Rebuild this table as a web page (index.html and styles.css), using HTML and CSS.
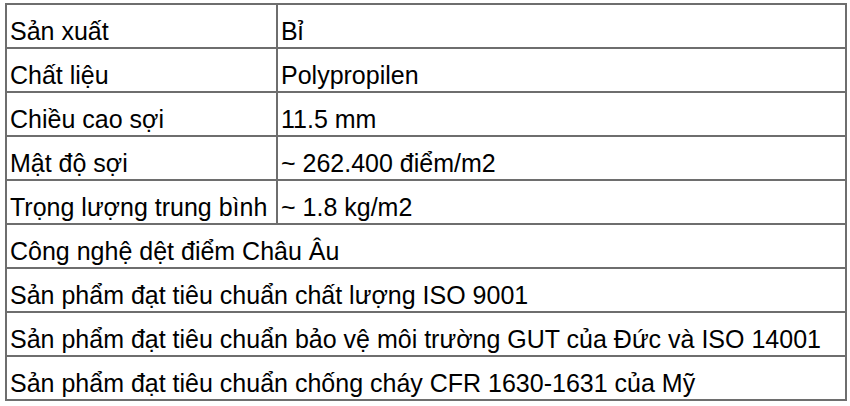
FILE: index.html
```html
<!DOCTYPE html>
<html lang="vi">
<head>
<meta charset="utf-8">
<link rel="stylesheet" href="styles.css">
</head>
<body>
<table class="spec">
  <tr><td class="label">Sản xuất</td><td class="value">Bỉ</td></tr>
  <tr><td class="label">Chất liệu</td><td class="value">Polypropilen</td></tr>
  <tr><td class="label">Chiều cao sợi</td><td class="value">11.5 mm</td></tr>
  <tr><td class="label">Mật độ sợi</td><td class="value">~ 262.400 điểm/m2</td></tr>
  <tr><td class="label">Trọng lượng trung bình</td><td class="value">~ 1.8 kg/m2</td></tr>
  <tr><td class="full" colspan="2">Công nghệ dệt điểm Châu Âu</td></tr>
  <tr><td class="full" colspan="2">Sản phẩm đạt tiêu chuẩn chất lượng ISO 9001</td></tr>
  <tr><td class="full" colspan="2">Sản phẩm đạt tiêu chuẩn bảo vệ môi trường GUT của Đức và ISO 14001</td></tr>
  <tr><td class="full" colspan="2">Sản phẩm đạt tiêu chuẩn chống cháy CFR 1630-1631 của Mỹ</td></tr>
</table>
</body>
</html>
```
FILE: styles.css
```css
html, body {
  margin: 0;
  padding: 0;
  background: #ffffff;
}
body {
  padding: 3px 0 0 5px;
  font-family: "Liberation Sans", Arial, sans-serif;
  color: #000;
}
.spec {
  border-collapse: collapse;
  width: 842px;
  table-layout: fixed;
  font-size: 25px;
}
.spec td {
  border: 2px solid #6e6e6e;
  height: 44px;
  box-sizing: border-box;
  padding: 0 3px 2px 3px;
  vertical-align: bottom;
  white-space: nowrap;
  line-height: 28px;
}
.spec .label {
  width: 271px;
}
```
